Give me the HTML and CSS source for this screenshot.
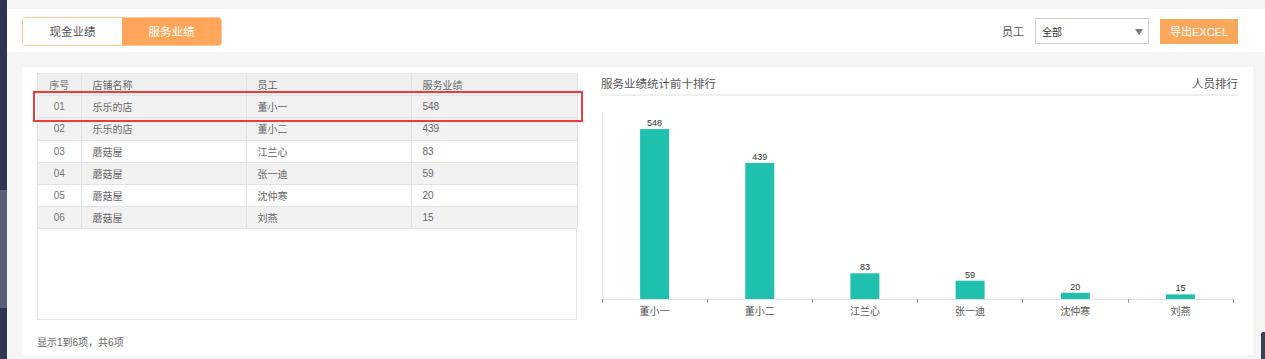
FILE: index.html
```html
<!DOCTYPE html>
<html lang="zh-CN">
<head>
<meta charset="utf-8">
<title>服务业绩</title>
<link rel="stylesheet" href="styles.css">
</head>
<body>
<div class="app">
  <aside class="sidebar"><div class="sidebar-active"></div></aside>
  <main class="main">
    <div class="topbar">
      <div class="segment">
        <div class="seg-item">现金业绩</div>
        <div class="seg-item seg-active">服务业绩</div>
      </div>
      <div class="tools">
        <span class="tool-label">员工</span>
        <div class="select"><span>全部</span><i class="caret"></i></div>
        <div class="btn-export">导出EXCEL</div>
      </div>
    </div>
    <section class="panel">
      <div class="left">
        <div class="table-box">
          <table class="grid">
            <colgroup><col class="c1"><col class="c2"><col class="c3"><col class="c4"></colgroup>
            <thead>
              <tr><th class="num">序号</th><th>店铺名称</th><th>员工</th><th>服务业绩</th></tr>
            </thead>
            <tbody>
              <tr class="odd"><td class="num">01</td><td>乐乐的店</td><td>董小一</td><td>548</td></tr>
              <tr class="odd"><td class="num">02</td><td>乐乐的店</td><td>董小二</td><td>439</td></tr>
              <tr><td class="num">03</td><td>蘑菇屋</td><td>江兰心</td><td>83</td></tr>
              <tr class="odd"><td class="num">04</td><td>蘑菇屋</td><td>张一迪</td><td>59</td></tr>
              <tr><td class="num">05</td><td>蘑菇屋</td><td>沈仲寒</td><td>20</td></tr>
              <tr class="odd"><td class="num">06</td><td>蘑菇屋</td><td>刘燕</td><td>15</td></tr>
            </tbody>
          </table>
          <div class="highlight"></div>
        </div>
        <div class="info">显示1到6项，共6项</div>
      </div>
      <div class="chart">
        <div class="chart-head">
          <span>服务业绩统计前十排行</span>
          <span>人员排行</span>
        </div>
        <svg class="chart-svg" width="637" height="224" viewBox="0 0 637 224">
          <line x1="1.5" y1="17" x2="1.5" y2="203" class="axis"/>
          <line x1="1" y1="203.5" x2="632" y2="203.5" class="axis"/>
          <g class="ticks">
            <line x1="1.5" y1="203" x2="1.5" y2="207"/>
            <line x1="106.5" y1="203" x2="106.5" y2="207"/>
            <line x1="211.5" y1="203" x2="211.5" y2="207"/>
            <line x1="316.5" y1="203" x2="316.5" y2="207"/>
            <line x1="421.5" y1="203" x2="421.5" y2="207"/>
            <line x1="527.5" y1="203" x2="527.5" y2="207"/>
            <line x1="632.5" y1="203" x2="632.5" y2="207"/>
          </g>
          <g class="bars">
            <rect x="39.1" y="33.1" width="29" height="169.9"/>
            <rect x="144.3" y="66.9" width="29" height="136.1"/>
            <rect x="249.4" y="177.3" width="29" height="25.7"/>
            <rect x="354.6" y="184.7" width="29" height="18.3"/>
            <rect x="459.8" y="196.8" width="29" height="6.2"/>
            <rect x="564.9" y="198.4" width="29" height="4.6"/>
          </g>
          <g class="vals">
            <text x="53.6" y="30">548</text>
            <text x="158.8" y="63.9">439</text>
            <text x="263.9" y="174.3">83</text>
            <text x="369.1" y="181.7">59</text>
            <text x="474.3" y="193.8">20</text>
            <text x="579.4" y="195.4">15</text>
          </g>
          <g class="cats">
            <text x="53.6" y="219">董小一</text>
            <text x="158.8" y="219">董小二</text>
            <text x="263.9" y="219">江兰心</text>
            <text x="369.1" y="219">张一迪</text>
            <text x="474.3" y="219">沈仲寒</text>
            <text x="579.4" y="219">刘燕</text>
          </g>
        </svg>
      </div>
    </section>
  </main>
  <div class="float-btn"></div>
</div>
</body>
</html>
```

FILE: styles.css
```css
* { box-sizing: border-box; }
html, body { margin: 0; padding: 0; }
body {
  background: #f5f5f5;
  font-family: "Liberation Sans", "Noto Sans CJK SC", sans-serif;
  color: #555;
  width: 1265px;
  height: 359px;
  overflow: hidden;
}
.app {
  display: flex;
  height: 359px;
  position: relative;
}
.sidebar {
  width: 7px;
  flex: none;
  background: #2e3452;
  height: 359px;
}
.sidebar-active {
  margin-top: 190px;
  height: 118px;
  background: #5b5f79;
}
.main {
  flex: 1;
  display: flex;
  flex-direction: column;
}
.topbar {
  margin-top: 9px;
  height: 43px;
  background: #fff;
  display: flex;
  align-items: center;
  justify-content: space-between;
  padding: 0 27px 0 15px;
}
.segment {
  display: flex;
  width: 200px;
  height: 29px;
  border: 1px solid #ffc48f;
  border-radius: 4px;
  overflow: hidden;
  margin-top: 1px;
}
.seg-item {
  flex: 1;
  display: flex;
  align-items: center;
  justify-content: center;
  font-size: 11.5px;
  color: #555;
  background: #fff;
}
.seg-active {
  background: #ffa65a;
  color: #fff;
}
.tools {
  display: flex;
  align-items: center;
  margin-top: 1px;
}
.tool-label {
  font-size: 11px;
  color: #555;
  margin-right: 11px;
}
.select {
  width: 114px;
  height: 26px;
  border: 1px solid #cfcfcf;
  display: flex;
  align-items: center;
  justify-content: space-between;
  padding: 0 5px 0 6px;
  font-size: 10px;
  color: #333;
  background: #fff;
}
.caret {
  width: 0;
  height: 0;
  border-left: 4px solid transparent;
  border-right: 4px solid transparent;
  border-top: 6px solid #777;
  margin-top: 1px;
}
.btn-export {
  margin-left: 11px;
  width: 78px;
  height: 25px;
  background: #f9a85b;
  color: #fff;
  font-size: 11px;
  display: flex;
  align-items: center;
  justify-content: center;
}
.panel {
  margin: 15px 12px 4px 15px;
  background: #fff;
  flex: 1;
  display: flex;
  padding: 6px 15px 0 15px;
}
.left {
  width: 540px;
  flex: none;
  display: flex;
  flex-direction: column;
}
.table-box {
  position: relative;
  height: 247px;
  border: 1px solid #e6e6e6;
  border-top: none;
}
.grid {
  width: 539px;
  border-collapse: collapse;
  table-layout: fixed;
  font-size: 10px;
  color: #666;
}
.c1 { width: 43px; }
.c2 { width: 165px; }
.c3 { width: 165px; }
.c4 { width: 166px; }
.grid th, .grid td {
  height: 22.2px;
  padding: 0 0 0 11px;
  text-align: left;
  font-weight: normal;
  border: 1px solid #e3e3e3;
  border-top: none;
  white-space: nowrap;
}
.grid th { background: #efefef; border-top: 1px solid #e6e6e6; }
.grid td:first-child, .grid th:first-child { border-left: none; }
.grid tr > :last-child { border-right: 1px solid #e3e3e3; }
.grid .num { text-align: center; padding: 0; color: #777; }
.grid tr.odd td { background: #f2f2f2; }
.grid tr td { background: #fff; }
.highlight {
  position: absolute;
  left: -5px;
  top: 18px;
  width: 550px;
  height: 31px;
  border: 2px solid #ee3c3c;
  pointer-events: none;
}
.info {
  margin-top: 16px;
  font-size: 10px;
  line-height: 14px;
  color: #666;
}
.chart {
  flex: 1;
  margin-left: 24px;
  display: flex;
  flex-direction: column;
}
.chart-head {
  height: 23px;
  display: flex;
  justify-content: space-between;
  align-items: center;
  font-size: 11.5px;
  color: #555;
  border-bottom: 2px solid #efefef;
  padding-bottom: 1px;
}
.chart-svg { display: block; }
.axis { stroke: #e2e2e2; stroke-width: 1; }
.ticks line { stroke: #999; stroke-width: 1; }
.bars rect { fill: #1fc0ae; }
.vals text {
  font-size: 9px;
  fill: #333;
  text-anchor: middle;
  font-family: "Liberation Sans", "Noto Sans CJK SC", sans-serif;
}
.cats text {
  font-size: 10px;
  fill: #555;
  text-anchor: middle;
  font-family: "Liberation Sans", "Noto Sans CJK SC", sans-serif;
}
.float-btn {
  position: absolute;
  right: 0;
  bottom: 0;
  width: 4px;
  height: 27px;
  background: #3b4052;
  border-radius: 2px 0 0 0;
}
```
